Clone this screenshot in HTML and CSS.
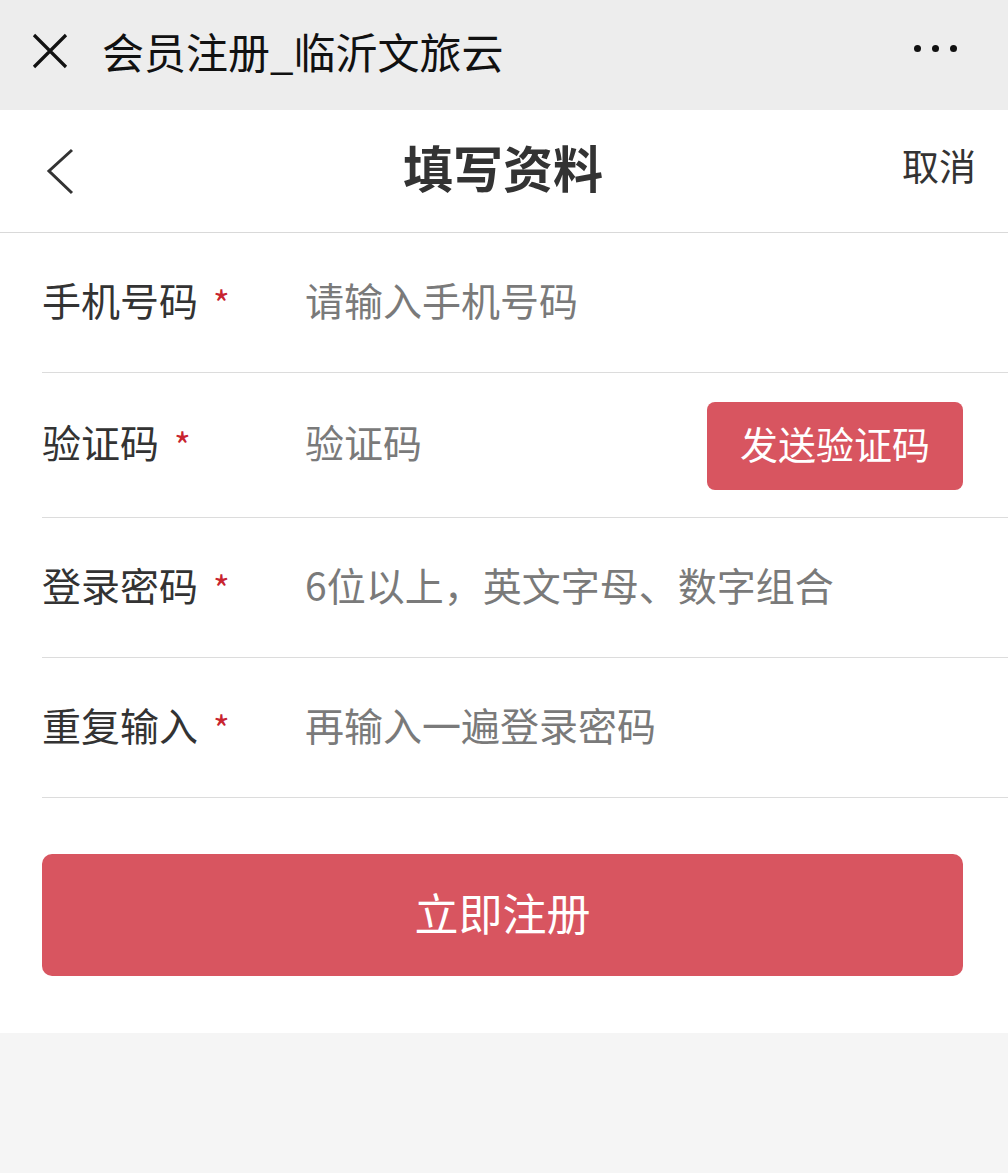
FILE: index.html
```html
<!DOCTYPE html>
<html>
<head>
<meta charset="utf-8">
<title>会员注册_临沂文旅云</title>
<link rel="stylesheet" href="styles.css">
</head>
<body>

<!-- wechat style top bar -->
<div class="topbar">
  <svg class="close-icon" width="36" height="36" viewBox="0 0 36 36">
    <path d="M2 2 L34 34 M34 2 L2 34" stroke="#111" stroke-width="3.2" fill="none"/>
  </svg>
  <div class="topbar-title">会员注册_临沂文旅云</div>
  <div class="more"><span></span><span></span><span></span></div>
</div>

<div class="page">
  <div class="navbar">
    <svg class="back-icon" width="30" height="48" viewBox="0 0 30 48">
      <path d="M26 2 L3 23 L26 45" stroke="#333" stroke-width="3" fill="none"/>
    </svg>
    <div class="nav-title">填写资料</div>
    <div class="nav-cancel">取消</div>
  </div>

  <form class="reg-form" onsubmit="return false">
    <div class="row">
      <label class="label">手机号码<span class="star">*</span></label>
      <input class="field" type="tel" placeholder="请输入手机号码">
    </div>
    <div class="row">
      <label class="label">验证码<span class="star">*</span></label>
      <input class="field" type="text" placeholder="验证码">
      <button class="code-btn" type="button">发送验证码</button>
    </div>
    <div class="row">
      <label class="label">登录密码<span class="star">*</span></label>
      <input class="field" type="password" placeholder="6位以上，英文字母、数字组合">
    </div>
    <div class="row">
      <label class="label">重复输入<span class="star">*</span></label>
      <input class="field" type="password" placeholder="再输入一遍登录密码">
    </div>

    <div class="submit-wrap">
      <button class="submit-btn" type="submit">立即注册</button>
    </div>
  </form>
</div>

</body>
</html>
```

FILE: styles.css
```css
html, body {
  margin: 0;
  padding: 0;
}

body {
  background-color: #f5f5f5;
  font-family: "Noto Sans CJK SC", "Noto Sans", sans-serif;
  color: #333;
}

/* top bar of the wechat browser */
.topbar {
  height: 110px;
  background-color: #ededed;
  display: flex;
  align-items: center;
  padding: 0 0 0 32px;
}

.close-icon {
  flex: none;
  margin-top: -8px;
}

.topbar-title {
  margin-left: 34px;
  margin-top: -10px;
  font-size: 42px;
  color: #111;
}

.more {
  margin-left: auto;
  margin-right: 51px;
  margin-top: -14px;
  display: flex;
  gap: 11px;
}

.more span {
  width: 7px;
  height: 7px;
  border-radius: 50%;
  background-color: #111;
}

/* white page area */
.page {
  background-color: #fff;
  padding-bottom: 57px;
}

.navbar {
  height: 122px;
  border-bottom: 1px solid #d9d9d9;
  display: flex;
  align-items: center;
  padding: 0 32px 0 46px;
}

.back-icon {
  flex: none;
  margin-top: 2px;
}

.nav-title {
  flex: 1;
  text-align: center;
  font-size: 50px;
  font-weight: bold;
  color: #333;
  margin-left: 28px;
  margin-top: -10px;
}

.nav-cancel {
  font-size: 37px;
  color: #333;
  margin-top: -12px;
}

/* form rows */
.row {
  margin-left: 42px;
  padding-right: 45px;
  height: 139px;
  border-bottom: 1px solid #dcdcdc;
  display: flex;
  align-items: center;
}

.row:nth-child(2) {
  height: 144px;
}

.label {
  width: 263px;
  flex: none;
  font-size: 39px;
  color: #333;
  display: flex;
  align-items: center;
  margin-bottom: 8px;
}

.star {
  color: #c8242f;
  font-size: 36px;
  margin-left: 15px;
  padding-top: 6px;
}

.field {
  flex: 1;
  min-width: 0;
  border: none;
  outline: none;
  padding: 0;
  margin-bottom: 8px;
  background: transparent;
  font-family: inherit;
  font-size: 39px;
  color: #333;
}

.field::placeholder {
  color: #7a7a7a;
}

.code-btn {
  flex: none;
  width: 256px;
  height: 88px;
  margin-top: 2px;
  border: none;
  border-radius: 8px;
  background-color: #d85560;
  color: #fff;
  font-family: inherit;
  font-size: 38px;
  padding: 0 0 8px;
}

.submit-wrap {
  padding: 56px 45px 0 42px;
}

.submit-btn {
  display: block;
  width: 100%;
  height: 122px;
  border: none;
  border-radius: 10px;
  background-color: #d85560;
  color: #fff;
  font-family: inherit;
  font-size: 44px;
  padding: 0 0 6px;
}
```
